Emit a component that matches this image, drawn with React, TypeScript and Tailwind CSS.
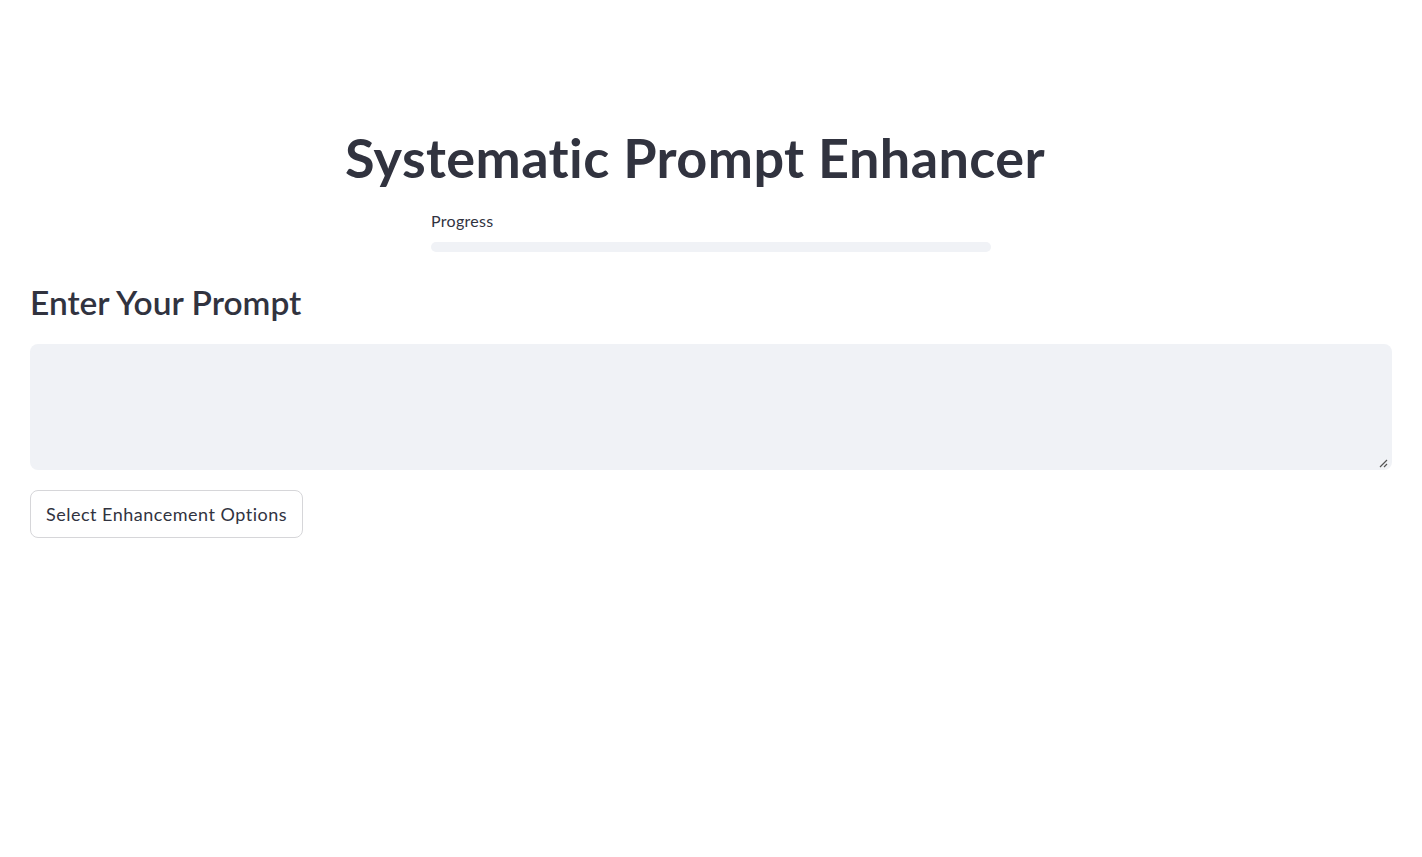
export default function App() {
    return (
        <div className="min-h-screen bg-white px-[30px] pt-[118px] text-[#31333f] [font-variant-ligatures:none]" style={{ fontFamily: 'Lato, "Noto Sans", sans-serif' }}>
            <h1 className="pr-[32px] text-center text-[54px] font-bold leading-[80px] tracking-[0.4px]">Systematic Prompt Enhancer</h1>

            <div className="mx-auto mt-[13px] w-[560px]">
                <p className="text-[16px] leading-[20px] tracking-[0.3px]">Progress</p>
                <div className="mt-[11px] h-[10px] w-full rounded-full bg-[#f0f2f6]" />
            </div>

            <h2 className="mt-[28px] text-[33.5px] font-semibold leading-[44px]">Enter Your Prompt</h2>

            <div className="relative mt-[20px] h-[126px] rounded-lg bg-[#f0f2f6]">
                <svg className="absolute bottom-[2px] right-[4px]" width="10" height="10" viewBox="0 0 10 10">
                    <path d="M9 2 L2 9 M9 6 L6 9" stroke="#555" strokeWidth="1.2" />
                </svg>
            </div>

            <button className="mt-[20px] h-[48px] rounded-lg border border-[#d6d6d9] bg-white px-[15px] text-[18px] tracking-[0.5px]">
                Select Enhancement Options
            </button>
        </div>
    )
}
